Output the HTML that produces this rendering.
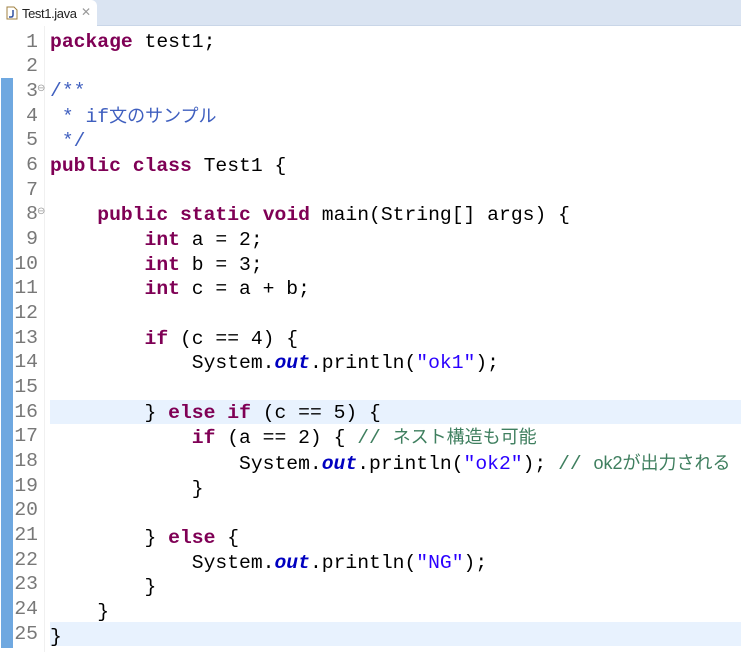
<!DOCTYPE html>
<html><head><meta charset="utf-8"><style>
body{margin:0;width:741px;height:652px;overflow:hidden;background:#fff;position:relative;font-family:"Liberation Mono","Noto Sans CJK JP",monospace}
.tabbar{position:absolute;left:0;top:0;width:741px;height:25px;background:#dae4f2;border-bottom:1px solid #c9d6e8}
.tab{position:absolute;left:0;top:0;width:97px;height:26px;background:#fff;border-top-right-radius:6px;font:13px "Liberation Sans",sans-serif;color:#222;letter-spacing:-0.4px}
.bar{position:absolute;left:1px;top:78px;width:12px;height:570px;background:#6fa8e0}
.sep{position:absolute;left:44px;top:26px;width:1px;height:626px;background:#f0f0f0}
.hl{position:absolute;left:50px;width:691px;height:24px;background:#e8f2fe}
pre{margin:0;position:absolute;top:29.5px;font-size:19.7px;line-height:24.67px;font-family:"Liberation Mono","Noto Sans CJK JP",monospace;color:#000}
.num{left:8px;width:30px;text-align:right;color:#787878}
.code{left:50px}
.k{color:#7f0055;font-weight:bold}.s{color:#2a00ff}.c{color:#3f7f5f}.d{color:#3f5fbf}.f{color:#0000c0;font-weight:bold;font-style:italic}
.j{font-family:"Liberation Sans","Noto Sans CJK JP",sans-serif;font-size:18px}
.fold{position:absolute;font-size:10px;color:#999;font-family:"Liberation Sans",sans-serif}
</style></head><body>
<div class="tabbar"></div>
<div class="tab">
<svg style="position:absolute;left:6px;top:6px" width="12" height="14"><path d="M1 1h7l3 3v9H1z" fill="#fff" stroke="#a08040"/><path d="M7 4v5q0 2-2 2H3" fill="none" stroke="#3050a0" stroke-width="1.5"/></svg>
<span style="position:absolute;left:22px;top:6px">Test1.java</span>
<span style="position:absolute;left:81px;top:5px;color:#999;font-size:12px">✕</span>
</div>
<div class="bar"></div>
<div class="sep"></div>
<div class="hl" style="top:399.5px"></div>
<div class="hl" style="top:622px"></div>
<div class="fold" style="left:37px;top:83px">⊖</div>
<div class="fold" style="left:37px;top:206px">⊖</div>
<pre class="num">1
2
3
4
5
6
7
8
9
10
11
12
13
14
15
16
17
18
19
20
21
22
23
24
25</pre>
<pre class="code"><span class="k">package</span> test1;

<span class="d">/**</span>
<span class="d"> * if<span class="j">文のサンプル</span></span>
<span class="d"> */</span>
<span class="k">public</span> <span class="k">class</span> Test1 {

    <span class="k">public</span> <span class="k">static</span> <span class="k">void</span> main(String[] args) {
        <span class="k">int</span> a = 2;
        <span class="k">int</span> b = 3;
        <span class="k">int</span> c = a + b;

        <span class="k">if</span> (c == 4) {
            System.<span class="f">out</span>.println(<span class="s">"ok1"</span>);

        } <span class="k">else</span> <span class="k">if</span> (c == 5) {
            <span class="k">if</span> (a == 2) { <span class="c">// <span class="j">ネスト構造も可能</span></span>
                System.<span class="f">out</span>.println(<span class="s">"ok2"</span>); <span class="c">// <span class="j">ok2が出力される</span></span>
            }

        } <span class="k">else</span> {
            System.<span class="f">out</span>.println(<span class="s">"NG"</span>);
        }
    }
}</pre>
</body></html>
